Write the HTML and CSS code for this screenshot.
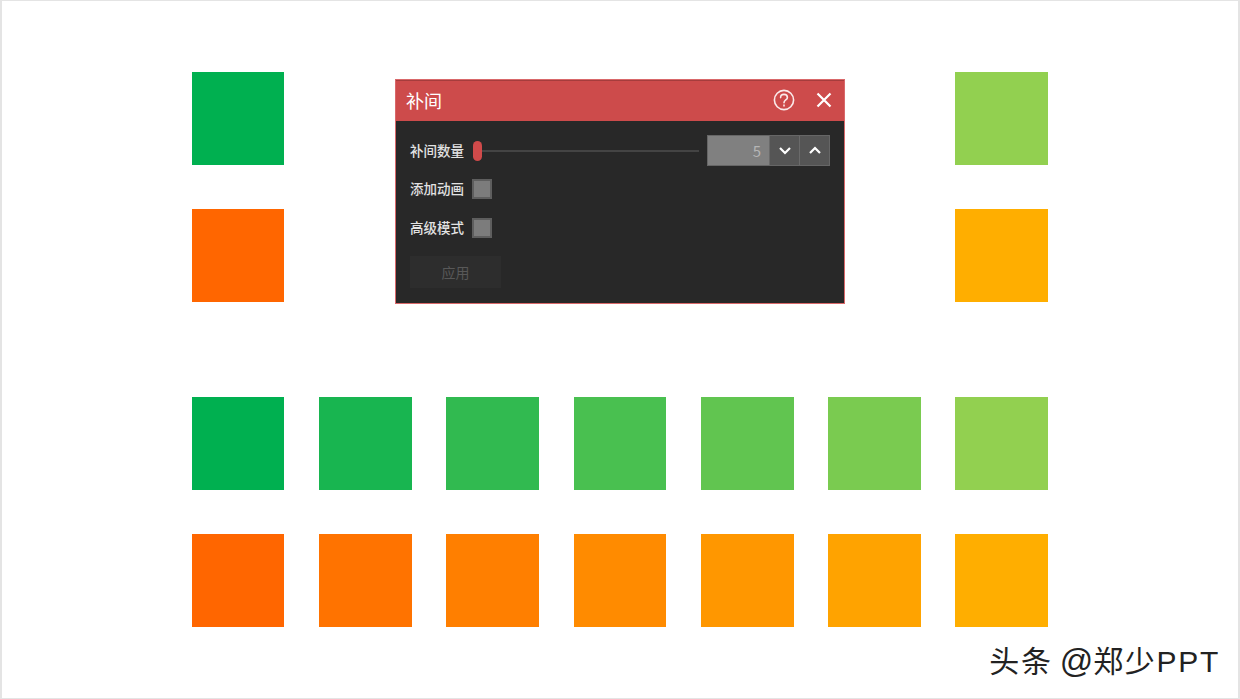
FILE: index.html
```html
<!DOCTYPE html>
<html>
<head>
    <title>补间</title>
    <link rel="stylesheet" href="styles.css">
</head>
<body>
    <div class="slide">
        <div class="swatches top">
            <div class="swatch g1"></div>
            <div class="swatch g7 last"></div>
            <div class="swatch o1"></div>
            <div class="swatch o7 last"></div>
        </div>
        <div class="swatches bottom">
            <div class="swatch g1"></div>
            <div class="swatch g2"></div>
            <div class="swatch g3"></div>
            <div class="swatch g4"></div>
            <div class="swatch g5"></div>
            <div class="swatch g6"></div>
            <div class="swatch g7"></div>
            <div class="swatch o1"></div>
            <div class="swatch o2"></div>
            <div class="swatch o3"></div>
            <div class="swatch o4"></div>
            <div class="swatch o5"></div>
            <div class="swatch o6"></div>
            <div class="swatch o7"></div>
        </div>

        <div class="dialog">
            <div class="titlebar">
                <span class="title">补间</span>
                <svg class="help" width="24" height="24" viewBox="0 0 24 24" fill="none" stroke="#fbeaea" stroke-width="1.6">
                    <circle cx="12" cy="12" r="9.6"/>
                    <path d="M8.6 9.6c0-2 1.5-3.2 3.4-3.2s3.4 1.2 3.4 3c0 2.600-3.400 2.600-3.400 5.400" stroke-linecap="round"/>
                    <path d="M12 16.600v1.800"/>
                </svg>
                <svg class="close" width="16" height="16" viewBox="0 0 16 16" fill="none" stroke="#ffffff" stroke-width="2.200">
                    <path d="M1.500 1.500l13 13M14.500 1.500l-13 13"/>
                </svg>
            </div>
            <div class="content">
                <div class="row first">
                    <label>补间数量</label>
                    <div class="slider"><span class="thumb"></span><span class="track"></span></div>
                    <div class="spinner">
                        <span class="value">5</span>
                        <span class="step">
                            <svg width="14" height="9" viewBox="0 0 14 9" fill="none" stroke="#fff" stroke-width="2.200"><path d="M2 2l5 5 5-5"/></svg>
                        </span>
                        <span class="step">
                            <svg width="14" height="9" viewBox="0 0 14 9" fill="none" stroke="#fff" stroke-width="2.200"><path d="M2 7l5-5 5 5"/></svg>
                        </span>
                    </div>
                </div>
                <div class="row">
                    <label>添加动画</label>
                    <span class="check"></span>
                </div>
                <div class="row">
                    <label>高级模式</label>
                    <span class="check"></span>
                </div>
                <button class="apply" type="button">应用</button>
            </div>
        </div>

        <div class="watermark">头条 <span class="at">@</span>郑少PPT</div>
    </div>
</body>
</html>
```

FILE: styles.css
```css
html, body {
    margin: 0;
    padding: 0;
}
body {
    background: #fff;
    font-family: "Noto Sans CJK SC", "Liberation Sans", sans-serif;
}
.slide {
    position: relative;
    width: 1240px;
    height: 699px;
    box-sizing: border-box;
    border: 1px solid #e4e4e4;
    border-left-width: 2px;
    border-right-width: 2px;
    padding: 71px 188px 0 189.700px;
    background: #fff;
    overflow: hidden;
}
.swatches {
    display: grid;
    grid-template-columns: repeat(7, 92.800px);
    grid-auto-rows: 93px;
    column-gap: 34.500px;
    row-gap: 44px;
}
.swatches.bottom {
    margin-top: 95px;
}
.swatch.last {
    grid-column: 7;
}
.g1 { background: #00b050; }
.g2 { background: #18b550; }
.g3 { background: #31ba50; }
.g4 { background: #49c050; }
.g5 { background: #61c550; }
.g6 { background: #7acb50; }
.g7 { background: #92d050; }
.o1 { background: #ff6600; }
.o2 { background: #ff7300; }
.o3 { background: #ff7f00; }
.o4 { background: #ff8b00; }
.o5 { background: #ff9700; }
.o6 { background: #ffa300; }
.o7 { background: #ffae00; }

.dialog {
    position: absolute;
    left: 393px;
    top: 78px;
    width: 450px;
    height: 225px;
    box-sizing: border-box;
    border: 1px solid #d9686a;
    background: #282828;
}
.titlebar {
    display: flex;
    align-items: center;
    height: 41px;
    padding: 0 12px 2px 10px;
    background: #cd4b4b;
    border-top: 1px solid #a53c3c;
    box-sizing: border-box;
}
.title {
    flex: 1;
    color: #fff;
    font-size: 18px;
}
.help {
    margin-right: 20px;
}
.content {
    padding: 14px 14px 0;
}
.row {
    display: flex;
    align-items: center;
    height: 20px;
    margin-bottom: 19px;
}
.row.first {
    height: 31px;
    margin-bottom: 13px;
}
label {
    width: 63px;
    color: #e2e2e2;
    font-size: 13.500px;
    font-weight: 500;
    line-height: 18px;
    margin-bottom: 3px;
}
.row.first label {
    margin-bottom: 1px;
}
.slider {
    display: flex;
    align-items: center;
    width: 226px;
}
.thumb {
    width: 9px;
    height: 20px;
    border-radius: 5px;
    background: #d04a4a;
}
.track {
    flex: 1;
    height: 2px;
    background: #444;
}
.spinner {
    display: flex;
    height: 31px;
    margin-left: 8px;
    box-sizing: border-box;
    border: 1px solid #666;
    background: #555;
}
.value {
    width: 61px;
    padding-right: 8px;
    box-sizing: border-box;
    background: #808080;
    color: #b5b5b5;
    font-size: 15px;
    line-height: 29px;
    text-align: right;
}
.step {
    display: flex;
    align-items: center;
    justify-content: center;
    width: 30px;
    border-left: 1px solid #6a6a6a;
    box-sizing: border-box;
}
.check {
    width: 20px;
    height: 20px;
    margin-left: -1px;
    box-sizing: border-box;
    border: 2px solid #5e5e5e;
    background: #7c7c7c;
}
.apply {
    display: block;
    width: 91px;
    height: 32px;
    margin-top: -1px;
    padding: 0;
    border: none;
    background: #2d2d2d;
    color: #585858;
    font-family: inherit;
    font-size: 14px;
}
.watermark {
    position: absolute;
    right: 18px;
    top: 639px;
    color: #222;
    font-size: 30px;
    line-height: 44px;
    letter-spacing: 1.700px;
    word-spacing: -3px;
    white-space: nowrap;
    font-family: "Liberation Sans", "Noto Sans CJK SC", sans-serif;
    text-shadow: 1px 1px 0 #fff;
}
.at {
    font-size: 33px;
    letter-spacing: 0;
    line-height: 30px;
}
```
